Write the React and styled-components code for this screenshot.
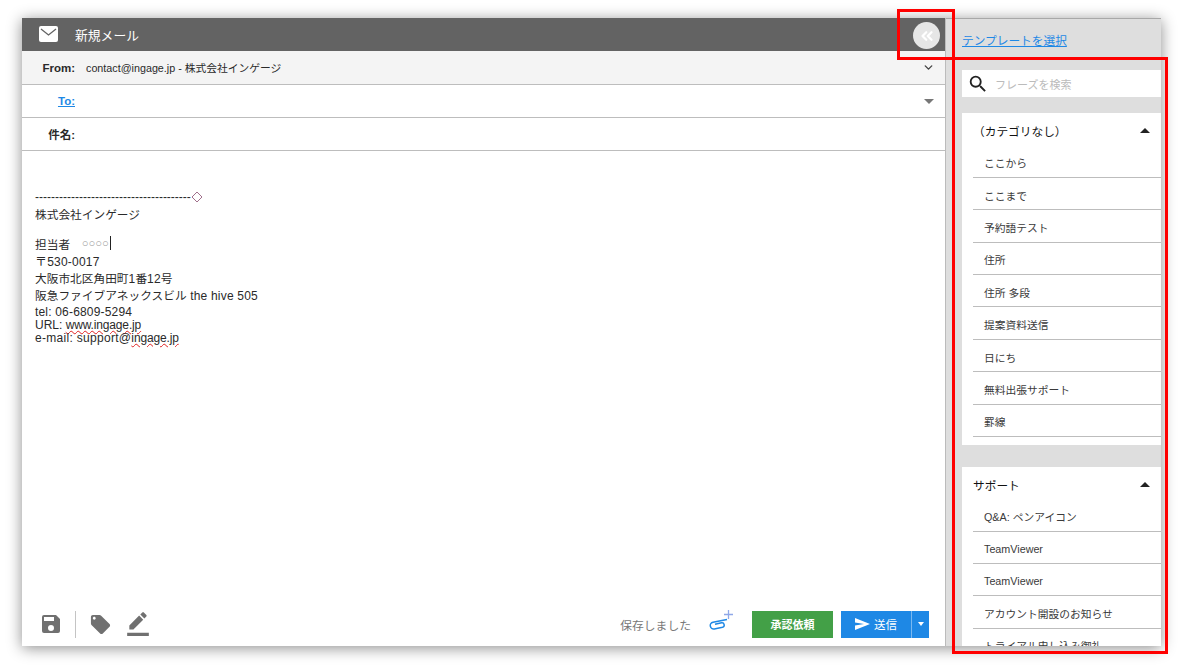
import React from 'react';
import styled, { createGlobalStyle } from 'styled-components';
import { ChevronDown, ChevronsLeft } from 'lucide-react';

const phraseGroups = [
  {
    name: '（カテゴリなし）',
    items: ['ここから', 'ここまで', '予約語テスト', '住所', '住所 多段', '提案資料送信', '日にち', '無料出張サポート', '罫線'],
  },
  {
    name: 'サポート',
    items: ['Q&A: ペンアイコン', 'TeamViewer', 'TeamViewer', 'アカウント開設のお知らせ', 'トライアル申し込み御礼'],
  },
];

function App() {
  return (
    <>
      <GlobalStyle />
      <Page>
        <MailWindow>
          <Composer>
            <TitleBar>
              <TitleIcon viewBox="0 0 19 16">
                <rect x="0" y="0" width="19" height="16" rx="2" fill="#fff" />
                <path d="M2 3 L9.500 9 L17 3" fill="none" stroke="#636363" strokeWidth="1.3" />
              </TitleIcon>
              <Title>新規メール</Title>
              <CollapseButton>
                <ChevronsLeft size={18} color="#fff" strokeWidth={3} />
              </CollapseButton>
            </TitleBar>
            <FieldRow $shaded $height={34}>
              <FieldLabel>From:</FieldLabel>
              <FromValue>contact@ingage.jp - 株式会社インゲージ</FromValue>
              <ChevronDown size={13} color="#444" strokeWidth={2.6} />
            </FieldRow>
            <FieldRow>
              <ToLabel>To:</ToLabel>
              <Spacer />
              <Caret $color="#777" $inset />
            </FieldRow>
            <FieldRow>
              <FieldLabel>件名:</FieldLabel>
            </FieldRow>
            <MailBody>
              <DividerLine>
                ---------------------------------------
                <Diamond viewBox="0 0 12 12">
                  <path d="M6 1 L11 6 L6 11 L1 6 Z" fill="#fff" stroke="#a0708c" strokeWidth="1" />
                </Diamond>
              </DividerLine>
              <Company>株式会社インゲージ</Company>
              <Person>
                担当者　<Circles>○○○○</Circles>
                <TextCursor />
              </Person>
              <Line $first>〒530-0017</Line>
              <Line>
                <Jp>大阪市北区角田町</Jp>1<Jp>番</Jp>12<Jp>号</Jp>
              </Line>
              <Line>
                <Jp>阪急ファイブアネックスビル</Jp> the hive 505
              </Line>
              <ContactLine $spacing={0.18}>tel: 06-6809-5294</ContactLine>
              <ContactLine $tight>
                URL: <Misspelt>www.ingage.jp</Misspelt>
              </ContactLine>
              <ContactLine $tight $spacing={0.3}>
                e-mail: support@<Misspelt>ingage.jp</Misspelt>
              </ContactLine>
            </MailBody>
            <Footer>
              <SaveIcon viewBox="0 0 24 24">
                <path d="M17 3H5a2 2 0 0 0-2 2v14a2 2 0 0 0 2 2h14a2 2 0 0 0 2-2V7l-4-4zm-5 16a3 3 0 1 1 0-6 3 3 0 0 1 0 6zm3-10H5V5h10v4z" fill="#707070" />
              </SaveIcon>
              <ToolDivider />
              <TagIcon viewBox="0 0 24 24">
                <path d="M21.410 11.580l-9-9C12.050 2.220 11.550 2 11 2H4c-1.100 0-2 .9-2 2v7c0 .55.22 1.050.59 1.420l9 9c.36.36.86.58 1.410.58.55 0 1.050-.22 1.410-.59l7-7c.37-.36.59-.86.59-1.410 0-.55-.23-1.060-.59-1.420zM5.500 7C4.670 7 4 6.330 4 5.500S4.670 4 5.500 4 7 4.670 7 5.500 6.330 7 5.500 7z" fill="#707070" />
              </TagIcon>
              <PenIcon viewBox="0 0 24 24">
                <path d="M22 24H2v-3h20v3zM13.060 5.190l3.750 3.750L7.750 18H4v-3.750l9.060-9.060zm4.820 2.680-3.750-3.750 1.830-1.830a.996.996 0 0 1 1.410 0l2.340 2.340c.39.39.39 1.020 0 1.410l-1.830 1.830z" fill="#707070" />
              </PenIcon>
              <Spacer />
              <SavedText>保存しました</SavedText>
              <AttachWrap>
                <svg width="20" height="12" viewBox="0 0 20 12">
                  <path d="M19 1.500 L5 4.200 a3.400 3.400 0 0 0 1.300 6.700 L14.500 9.300 a2.300 2.300 0 0 0 -.9 -4.500 L7 6.300" fill="none" stroke="#1e88e5" strokeWidth="1.500" />
                </svg>
                <AttachPlus viewBox="0 0 9 9">
                  <path d="M4.500 0V9M0 4.500H9" stroke="#8fa8e8" strokeWidth="1.300" />
                </AttachPlus>
              </AttachWrap>
              <ApproveButton>承認依頼</ApproveButton>
              <SendGroup>
                <SendButton>
                  <svg width="15" height="12" viewBox="0 0 15 12">
                    <path d="M0 0 L15 6 L0 12 L0 7.500 L9 6 L0 4.500 Z" fill="#fff" />
                  </svg>
                  送信
                </SendButton>
                <SendMenu>
                  <Caret $color="#fff" $small />
                </SendMenu>
              </SendGroup>
            </Footer>
          </Composer>
          <SidePanel>
            <TemplateHead>
              <TemplateLink>テンプレートを選択</TemplateLink>
            </TemplateHead>
            <SearchBox>
              <SearchIcon viewBox="0 0 24 24">
                <path d="M15.500 14h-.79l-.28-.27A6.471 6.471 0 0 0 16 9.500 6.500 6.500 0 1 0 9.500 16c1.610 0 3.090-.59 4.230-1.570l.27.28v.79l5 4.990L20.490 19l-4.990-5zm-6 0C7.010 14 5 11.990 5 9.500S7.010 5 9.500 5 14 7.010 14 9.500 11.990 14 9.500 14z" fill="#222" />
              </SearchIcon>
              <SearchHint>フレーズを検索</SearchHint>
            </SearchBox>
            {phraseGroups.map((group) => (
              <PhraseGroup key={group.name}>
                <GroupHead>
                  <span>{group.name}</span>
                  <CaretUp />
                </GroupHead>
                {group.items.map((item, i) => (
                  <PhraseItem key={i}>{item}</PhraseItem>
                ))}
              </PhraseGroup>
            ))}
          </SidePanel>
        </MailWindow>
        <CalloutTop />
        <CalloutSide />
      </Page>
    </>
  );
}

const GlobalStyle = createGlobalStyle`
  html, body {
    margin: 0;
    background: #fff;
  }
  body {
    font-family: "Liberation Sans", "Noto Sans CJK JP", sans-serif;
    color: #333;
    overflow: hidden;
  }
`;

const Page = styled.div`
  position: relative;
  width: 1182px;
  height: 666px;
  padding: 18px 21px 20px 22px;
  box-sizing: border-box;
`;

const MailWindow = styled.div`
  display: flex;
  height: 100%;
  box-shadow: 0 2px 14px rgba(0, 0, 0, 0.45);
  overflow: hidden;
`;

const Composer = styled.div`
  width: 924px;
  flex: none;
  box-sizing: border-box;
  display: flex;
  flex-direction: column;
  background: #fff;
  border-right: 1px solid #bbb;
`;

const TitleBar = styled.div`
  position: relative;
  height: 33px;
  flex: none;
  display: flex;
  align-items: center;
  padding-left: 17px;
  background: #636363;
`;

const TitleIcon = styled.svg`
  width: 19px;
  height: 16px;
  margin-top: -1px;
`;

const Title = styled.span`
  margin-left: 17px;
  font-size: 12.8px;
  color: #fff;
`;

const CollapseButton = styled.div`
  position: absolute;
  right: 5px;
  top: 4px;
  width: 27px;
  height: 27px;
  border-radius: 50%;
  background: #e6e6e6;
  display: flex;
  align-items: center;
  justify-content: center;
`;

const FieldRow = styled.div`
  height: ${(p) => p.$height || 33}px;
  flex: none;
  box-sizing: border-box;
  display: flex;
  align-items: center;
  padding-right: 10px;
  background: ${(p) => (p.$shaded ? '#f4f4f4' : '#fff')};
  border-bottom: 1px solid #bdbdbd;
`;

const FieldLabel = styled.span`
  width: 53px;
  flex: none;
  text-align: right;
  font-size: 11.5px;
  font-weight: bold;
  color: #2a2a2a;
`;

const ToLabel = styled(FieldLabel)`
  color: #1e88e5;
  text-decoration: underline;
`;

const FromValue = styled.span`
  flex: 1;
  margin-left: 11px;
  font-size: 10.75px;
  color: #2a2a2a;
`;

const Spacer = styled.div`
  flex: 1;
`;

const Caret = styled.span`
  width: 0;
  height: 0;
  margin-right: ${(p) => (p.$inset ? 1 : 0)}px;
  border-left: ${(p) => (p.$small ? 3.5 : 5)}px solid transparent;
  border-right: ${(p) => (p.$small ? 3.5 : 5)}px solid transparent;
  border-top: ${(p) => (p.$small ? 4 : 5)}px solid ${(p) => p.$color};
`;

const CaretUp = styled.span`
  width: 0;
  height: 0;
  border-left: 5px solid transparent;
  border-right: 5px solid transparent;
  border-bottom: 5px solid #222;
`;

const MailBody = styled.div`
  flex: 1;
  padding: 38px 0 0 13px;
  font-size: 12px;
  color: #2a2a2a;
  min-height: 0;
`;

const DividerLine = styled.div`
  display: flex;
  align-items: center;
  height: 15px;
  font-size: 12px;
`;

const Diamond = styled.svg`
  width: 12px;
  height: 12px;
  flex: none;
`;

const Company = styled.div`
  margin-top: 3px;
  height: 16px;
  line-height: 16px;
  font-size: 11.7px;
`;

const Person = styled.div`
  display: flex;
  align-items: center;
  margin-top: 12px;
  height: 16px;
  font-size: 11.7px;
`;

const Circles = styled.span`
  font-family: "Liberation Sans", sans-serif;
  font-size: 11.2px;
  color: #999;
`;

const TextCursor = styled.span`
  width: 1px;
  height: 14px;
  margin-left: 1px;
  background: #222;
`;

const Line = styled.div`
  height: ${(p) => (p.$first ? 16 : 17)}px;
  line-height: ${(p) => (p.$first ? 16 : 17)}px;
  margin-top: ${(p) => (p.$first ? 3 : 0)}px;
  letter-spacing: 0.2px;
`;

const Jp = styled.span`
  font-size: 11.7px;
  letter-spacing: 0;
`;

const ContactLine = styled.div`
  height: 13px;
  line-height: 13px;
  margin-top: ${(p) => (p.$tight ? 0 : 2)}px;
  letter-spacing: ${(p) => p.$spacing || 0}px;
`;

const Misspelt = styled.span`
  letter-spacing: -0.15px;
  text-decoration: underline wavy #e02020 1px;
  text-underline-offset: 1px;
`;

const Footer = styled.div`
  height: 44px;
  flex: none;
  display: flex;
  align-items: center;
  padding: 0 16px 0 17px;
`;

const SaveIcon = styled.svg`
  width: 24px;
  height: 24px;
  flex: none;
`;

const ToolDivider = styled.div`
  width: 1px;
  height: 27px;
  margin: 0 13px 0 12px;
  background: #c4c4c4;
`;

const TagIcon = styled.svg`
  width: 23px;
  height: 23px;
  flex: none;
`;

const PenIcon = styled.svg`
  width: 26px;
  height: 26px;
  flex: none;
  margin: -3px 0 0 13px;
`;

const SavedText = styled.span`
  font-size: 11.8px;
  color: #777;
`;

const AttachWrap = styled.div`
  position: relative;
  width: 24px;
  height: 24px;
  margin: 0 20px 0 17px;
  display: flex;
  align-items: center;
`;

const AttachPlus = styled.svg`
  position: absolute;
  right: -1px;
  top: -2px;
  width: 9px;
  height: 9px;
`;

const ApproveButton = styled.div`
  width: 81px;
  height: 27px;
  display: flex;
  align-items: center;
  justify-content: center;
  background: #43a047;
  color: #fff;
  font-size: 11px;
  font-weight: bold;
`;

const SendGroup = styled.div`
  display: flex;
  height: 27px;
  margin-left: 8px;
  background: #1e88e5;
`;

const SendButton = styled.div`
  width: 70px;
  display: flex;
  align-items: center;
  justify-content: center;
  gap: 4px;
  color: #fff;
  font-size: 11.5px;
`;

const SendMenu = styled.div`
  width: 17px;
  display: flex;
  align-items: center;
  justify-content: center;
  border-left: 1px solid #7ab8f0;
`;

const SidePanel = styled.div`
  flex: 1;
  min-width: 0;
  overflow: hidden;
  background: #dedede;
  padding-left: 16px;
  border-top: 1px solid #a8a8a8;
`;

const TemplateHead = styled.div`
  height: 51px;
  display: flex;
  align-items: center;
  padding-bottom: 11px;
  box-sizing: border-box;
`;

const TemplateLink = styled.span`
  font-size: 11.7px;
  color: #1e88e5;
  text-decoration: underline;
`;

const SearchBox = styled.div`
  height: 27px;
  display: flex;
  align-items: center;
  padding-left: 5px;
  background: #fff;
`;

const SearchIcon = styled.svg`
  width: 22px;
  height: 22px;
  flex: none;
`;

const SearchHint = styled.span`
  margin-left: 6px;
  font-size: 11px;
  color: #bbb;
`;

const PhraseGroup = styled.div`
  margin-top: 16px;
  padding: 0 0 8.3px 11px;
  background: #fff;

  & + & {
    margin-top: 21.3px;
  }
`;

const GroupHead = styled.div`
  height: 32.5px;
  box-sizing: border-box;
  display: flex;
  align-items: center;
  justify-content: space-between;
  padding: 3px 11px 0 0;
  font-size: 11.7px;
  color: #111;
`;

const PhraseItem = styled.div`
  height: 32.4px;
  box-sizing: border-box;
  display: flex;
  align-items: center;
  padding: 3px 0 0 11px;
  font-size: 10.75px;
  color: #3a3a3a;
  border-bottom: 1px solid #bdbdbd;
`;

const CalloutTop = styled.div`
  position: absolute;
  left: 897px;
  top: 9px;
  width: 58px;
  height: 51px;
  box-sizing: border-box;
  border: 3px solid #f00;
`;

const CalloutSide = styled.div`
  position: absolute;
  left: 952px;
  top: 57px;
  width: 216px;
  height: 597px;
  box-sizing: border-box;
  border: 3px solid #f00;
`;

export default App;
